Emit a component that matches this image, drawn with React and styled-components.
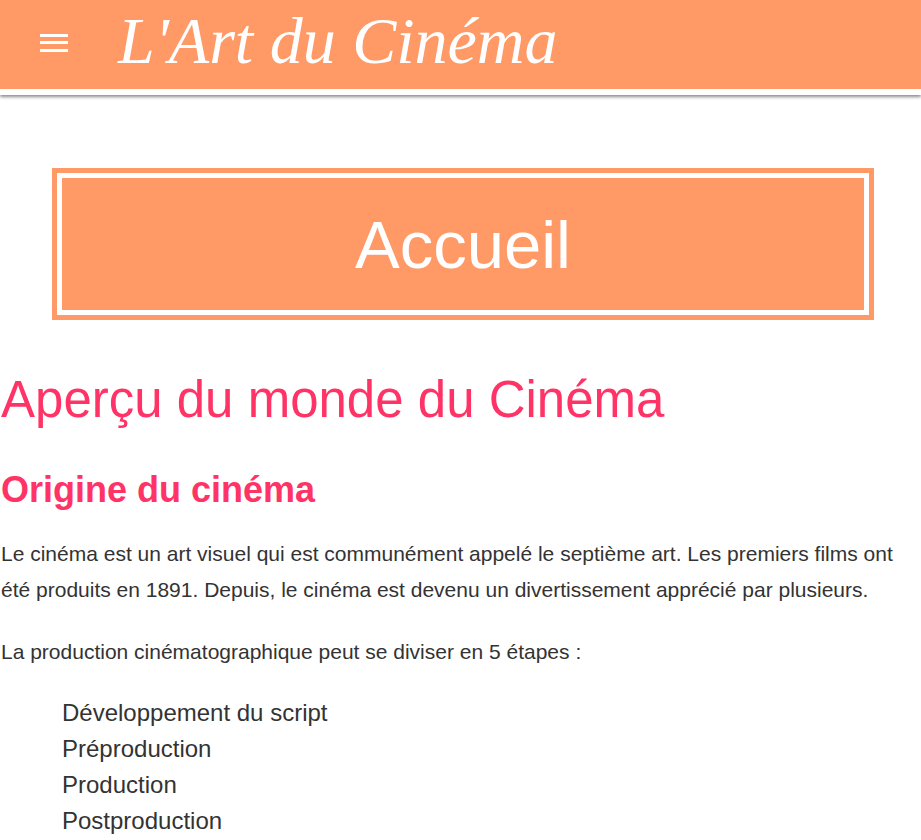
import styled, { createGlobalStyle } from "styled-components";

const GlobalStyle = createGlobalStyle`
  body {
    margin: 0;
    font-family: "Liberation Sans", Arial, sans-serif;
    background: #fff;
  }
`;

const Header = styled.header`
  display: flex;
  align-items: center;
  height: 89px;
  padding-left: 40px;
  background: #ff9966;
  border-bottom: 6px solid #fff;
  box-shadow: 0 2px 3px rgba(0, 0, 0, 0.45);
`;

const MenuButton = styled.button`
  display: flex;
  padding: 0;
  border: none;
  background: none;
  cursor: pointer;
  margin-top: -4px;
`;

const Title = styled.h1`
  margin: -8px 0 0 50px;
  font-family: "Liberation Serif", "Times New Roman", serif;
  font-style: italic;
  font-weight: normal;
  font-size: 66px;
  color: #fff;
`;

const Main = styled.main`
  padding: 78px 0 0 1px;
`;

const Banner = styled.div`
  margin: 0 52px 0 56px;
  height: 142px;
  display: flex;
  align-items: center;
  justify-content: center;
  background: #ff9966;
  border: 5px solid #fff;
  outline: 5px solid #ff9966;
  box-sizing: border-box;
  color: #fff;
  font-size: 67px;
`;

const Heading = styled.h2`
  margin: 55px 0 0;
  font-size: 51px;
  font-weight: normal;
  color: #ff3366;
`;

const SubHeading = styled.h3`
  margin: 40px 0 0;
  font-size: 36px;
  font-weight: bold;
  color: #ff3366;
`;

const Paragraph = styled.p`
  margin: ${(props) => (props.first ? "25px" : "26px")} 0 0;
  font-size: 21px;
  line-height: 36px;
  color: #333;
`;

const Steps = styled.ul`
  list-style: none;
  margin: 25px 0 0;
  padding-left: 61px;
`;

const Step = styled.li`
  font-size: 24px;
  line-height: 36px;
  color: #333;
`;

const MenuIcon = () => (
  <svg width="28" height="18" viewBox="0 0 28 18" fill="#fff">
    <rect x="0" y="0" width="28" height="3" />
    <rect x="0" y="7" width="28" height="3" />
    <rect x="0" y="15" width="28" height="3" />
  </svg>
);

const steps = [
  "Développement du script",
  "Préproduction",
  "Production",
  "Postproduction",
  "Distribution",
];

export default function App() {
  return (
    <>
      <GlobalStyle />
      <Header>
        <MenuButton aria-label="menu">
          <MenuIcon />
        </MenuButton>
        <Title>L'Art du Cinéma</Title>
      </Header>
      <Main>
        <Banner>Accueil</Banner>
        <Heading>Aperçu du monde du Cinéma</Heading>
        <SubHeading>Origine du cinéma</SubHeading>
        <Paragraph first>
          Le cinéma est un art visuel qui est communément appelé le septième art. Les premiers films ont
          été produits en 1891. Depuis, le cinéma est devenu un divertissement apprécié par plusieurs.
        </Paragraph>
        <Paragraph>La production cinématographique peut se diviser en 5 étapes :</Paragraph>
        <Steps>
          {steps.map((s) => (
            <Step key={s}>{s}</Step>
          ))}
        </Steps>
      </Main>
    </>
  );
}
